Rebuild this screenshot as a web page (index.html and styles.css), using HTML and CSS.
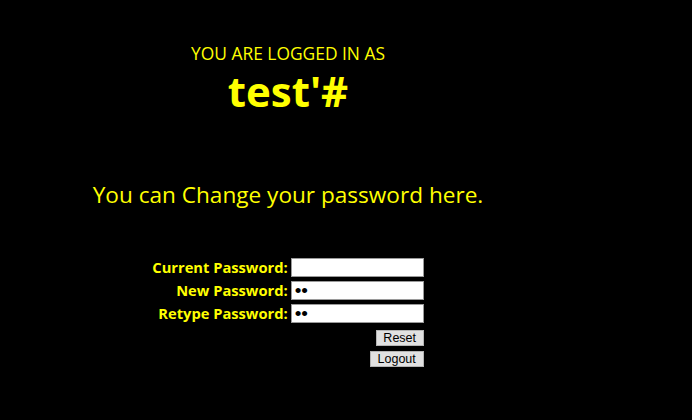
FILE: index.html
```html
<!DOCTYPE html>
<html>
<head>
<meta charset="utf-8">
<link rel="stylesheet" href="styles.css">
</head>
<body>
<div class="wrap">
  <div class="logged">YOU ARE LOGGED IN AS</div>
  <div class="user">test'#</div>
  <div class="change">You can Change your password here.</div>
  <form class="form">
    <label class="lbl" for="cur">Current Password:</label>
    <input class="inp" id="cur" type="password" value="">
    <label class="lbl" for="new">New Password:</label>
    <input class="inp" id="new" type="password" value="ab">
    <label class="lbl" for="re">Retype Password:</label>
    <input class="inp" id="re" type="password" value="ab">
    <button class="btn btn-reset" type="reset">Reset</button>
    <button class="btn btn-logout" type="button">Logout</button>
  </form>
</div>
</body>
</html>
```
FILE: styles.css
```css
html, body {
  margin: 0;
  padding: 0;
  background: #000;
}
body {
  padding: 0 8px;
  font-family: "Open Sans", "Noto Sans", sans-serif;
  color: #ffff00;
}
.wrap {
  width: 560px;
  display: flex;
  flex-direction: column;
  align-items: center;
}
.logged {
  margin-top: 42px;
  font-size: 17.4px;
  line-height: 22px;
}
.user {
  margin-top: 3px;
  font-size: 42px;
  font-weight: 700;
  line-height: 48px;
}
.change {
  margin-top: 66px;
  font-size: 22.6px;
  line-height: 28px;
}
.form {
  margin: 49px 0 0 0;
  display: grid;
  grid-template-columns: auto 133px;
  column-gap: 3px;
  row-gap: 4px;
  align-items: center;
}
.lbl {
  justify-self: end;
  font-size: 14.7px;
  font-weight: 700;
  line-height: 19px;
}
.inp {
  box-sizing: border-box;
  width: 133px;
  height: 19px;
  margin: 0;
  padding: 0 3px;
  border: 1px solid #9a9a9a;
  background: #fff;
  font-family: "Liberation Sans", Arial, sans-serif;
  font-size: 19px;
  color: #000;
  outline: none;
}
.btn {
  grid-column: 2;
  justify-self: end;
  box-sizing: border-box;
  height: 16px;
  margin: 0;
  padding: 0 4px;
  border: 1px solid #b4b4b4;
  border-radius: 0;
  background: #e1e1e1;
  font-family: "Liberation Sans", Arial, sans-serif;
  font-size: 12.5px;
  line-height: 14px;
  color: #000;
}
.btn-reset {
  width: 48px;
  margin-top: 3px;
}
.btn-logout {
  width: 54px;
  margin-top: 1px;
}
```
